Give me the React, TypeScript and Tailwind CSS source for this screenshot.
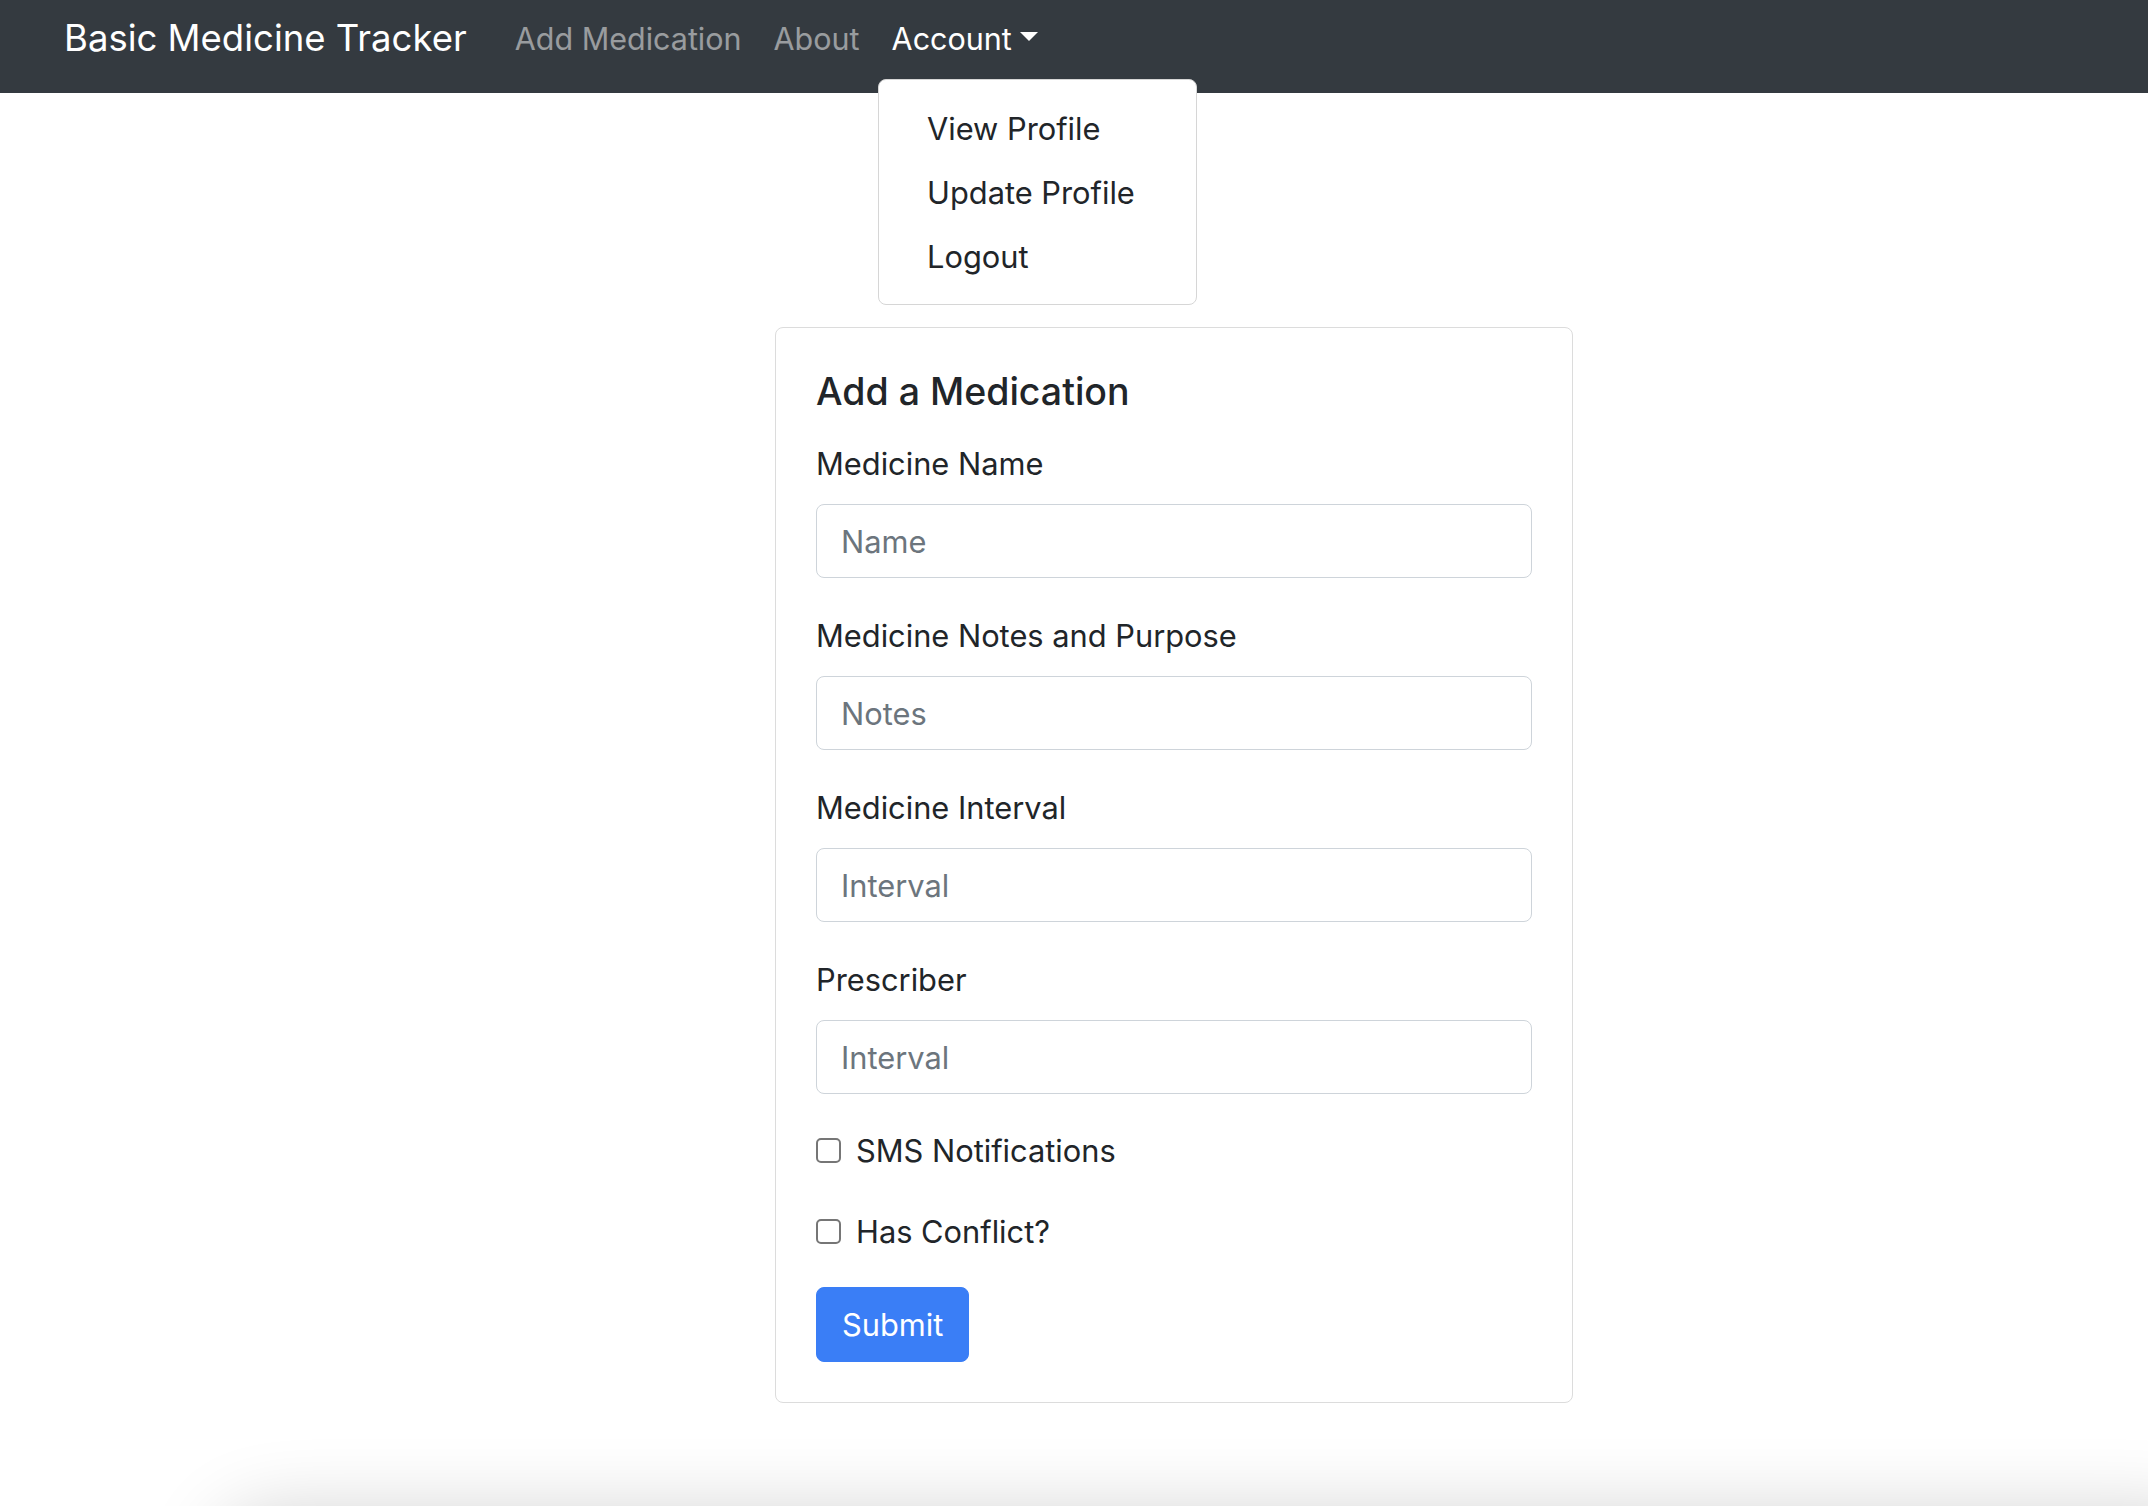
import React from "react";

function Field({ label, placeholder }: { label: string; placeholder: string }) {
  return (
    <div className="mb-[35px]">
      <label className="block text-[30.8px] leading-[46px] mb-[17px] text-[#212529]">{label}</label>
      <input
        type="text"
        placeholder={placeholder}
        className="block w-full h-[74px] border border-[#ced4da] rounded-[8px] px-[24px] text-[30.8px] text-[#495057] placeholder:text-[#6c757d] bg-white outline-none"
      />
    </div>
  );
}

function Check({ label, className }: { label: string; className?: string }) {
  return (
    <div className={"flex items-center h-[46px] " + (className ?? "")}>
      <span className="w-[25px] h-[25px] border-2 border-[#767676] rounded-[5px] bg-white mr-[15px] -mt-[2px] shrink-0" />
      <span className="text-[30.8px] leading-[46px] text-[#212529]">{label}</span>
    </div>
  );
}

export default function App() {
  return (
    <div className="h-[1506px] overflow-hidden bg-white font-['Inter','Noto_Sans',sans-serif] text-[#212529]">
      <nav className="relative h-[93px] bg-[#343a40] pt-[10px] pl-[64px]">
        <div className="flex items-center h-[57px]">
          <span className="text-[36.5px] leading-[57px] text-white mr-[32px]">Basic Medicine Tracker</span>
          <span className="text-[30.5px] leading-[46px] text-white/50 px-[16px]">Add Medication</span>
          <span className="text-[30.5px] leading-[46px] text-white/50 px-[16px]">About</span>
          <span className="text-[30.5px] leading-[46px] text-white px-[16px] flex items-center">
            Account
            <span className="inline-block ml-[8px] -mt-[4px] w-0 h-0 border-t-[9px] border-t-white border-x-[9px] border-x-transparent" />
          </span>
        </div>
        <div className="absolute z-10 left-[878px] top-[79px] w-[319px] bg-white border border-[#d6d6d6] rounded-[8px] pt-[17px] pb-[15px]">
          {["View Profile", "Update Profile", "Logout"].map((t) => (
            <div key={t} className="px-[48px] py-[9px] text-[30.8px] leading-[46px] text-[#212529]">
              {t}
            </div>
          ))}
        </div>
      </nav>
      <main className="h-[1413px] pt-[234px] flex flex-col items-start">
        <div className="ml-[775px] w-[798px] border border-[#dcdcdc] rounded-[8px] pt-[41px] px-[40px] pb-[40px]">
          <h5 className="text-[37.5px] leading-[46px] font-medium mb-[26px] text-[#212529]">Add a Medication</h5>
          <Field label="Medicine Name" placeholder="Name" />
          <Field label="Medicine Notes and Purpose" placeholder="Notes" />
          <Field label="Medicine Interval" placeholder="Interval" />
          <Field label="Prescriber" placeholder="Interval" />
          <Check label="SMS Notifications" className="-mt-[1px] mb-[35px]" />
          <Check label="Has Conflict?" className="mb-[32px]" />
          <button className="h-[75px] px-[25px] bg-[#3a7ef6] border border-[#3a7ef6] rounded-[8px] text-white text-[30.8px] leading-[46px]">
            Submit
          </button>
        </div>
      </main>
      <div className="ml-[230px] mr-[-60px] mt-[20px] h-[200px] bg-white rounded-[40px] shadow-[0_0_80px_10px_rgba(0,0,0,0.2)]" />
    </div>
  );
}
